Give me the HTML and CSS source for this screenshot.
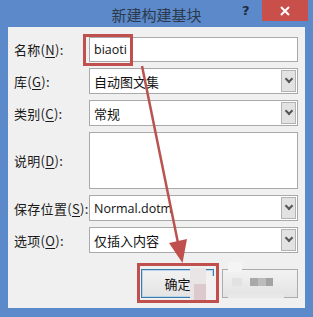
FILE: index.html
```html
<!DOCTYPE html>
<html>
  <head>
    <title>新建构建基块</title>
    <meta charset="UTF-8" />
    <link rel="stylesheet" href="styles.css">
  </head>
  <body>
    <div class="frame">
      <div class="titlebar">
        <span class="title">新建构建基块</span>
        <span class="help">?</span>
        <span class="close">
          <svg width="12" height="10" viewBox="0 0 12 10"><path d="M2 1 L10 9 M10 1 L2 9" stroke="#fff" stroke-width="2"/></svg>
        </span>
      </div>

      <div class="client">
        <div class="form">
          <label>名称(<u>N</u>):</label>
          <div class="field latin">biaoti</div>

          <label>库(<u>G</u>):</label>
          <div class="field">自动图文集<span class="drop"></span></div>

          <label>类别(<u>C</u>):</label>
          <div class="field">常规<span class="drop"></span></div>

          <label>说明(<u>D</u>):</label>
          <div class="field memo"></div>

          <label>保存位置(<u>S</u>):</label>
          <div class="field latin">Normal.dotm<span class="drop"></span></div>

          <label>选项(<u>O</u>):</label>
          <div class="field">仅插入内容<span class="drop"></span></div>
        </div>

        <div class="buttons">
          <button class="btn default">确定</button>
          <button class="btn"></button>
        </div>
      </div>

      <svg class="annot" width="313" height="317" viewBox="0 0 313 317">
        <!-- mosaic over cancel button -->
        <rect x="190" y="268" width="16" height="32" fill="#e9e4e6"/>
        <rect x="194" y="284" width="12" height="16" fill="#dcc9cd"/>
        <rect x="206" y="276" width="10" height="24" fill="#f3f1f2"/>
        <rect x="228" y="262" width="14" height="10" fill="#f4f4f4"/>
        <rect x="250" y="278" width="8" height="8" fill="#a9a9a9"/>
        <rect x="258" y="278" width="8" height="8" fill="#bcbcbc"/>
        <rect x="266" y="278" width="7" height="8" fill="#a3a3a3"/>
        <rect x="232" y="278" width="10" height="8" fill="#e2e2e2"/>
        <rect x="228" y="294" width="56" height="4" fill="#e8e8e8"/>
        <!-- annotation boxes and arrow -->
        <rect x="84.5" y="35.5" width="47" height="29" fill="none" stroke="#c0504d" stroke-width="3"/>
        <rect x="138.5" y="264.5" width="79" height="37" fill="none" stroke="#c0504d" stroke-width="3"/>
        <line x1="142" y1="66" x2="178" y2="243" stroke="#b85450" stroke-width="2.5"/>
        <polygon points="169,243 187,239 182.5,263" fill="#c0504d"/>
      </svg>
    </div>
  </body>
</html>
```

FILE: styles.css
```css
html, body {
  margin: 0;
  height: 100%;
}
body {
  background: #5b89ca;
  font-family: "Noto Sans CJK SC", sans-serif;
}

.frame {
  position: relative;
  width: 313px;
  height: 317px;
  display: flex;
  flex-direction: column;
}

.titlebar {
  height: 30px;
  display: flex;
  align-items: flex-start;
  position: relative;
}
.title {
  position: absolute;
  left: 0;
  right: 0;
  top: 4px;
  text-align: center;
  font-size: 15px;
  color: #2c3a4c;
  line-height: 22px;
}
.help {
  position: absolute;
  left: 242px;
  top: 3px;
  font-family: "DejaVu Sans", sans-serif;
  font-weight: bold;
  font-size: 13px;
  color: #1d2b40;
}
.close {
  margin-left: auto;
  margin-right: 5px;
  width: 46px;
  height: 21px;
  background: #c9504a;
  display: flex;
  align-items: center;
  justify-content: center;
}

.client {
  flex: 1;
  margin: 0 8px 9px 8px;
  background: #f0f0f0;
  padding: 10px 7px 10px 6px;
  display: flex;
  flex-direction: column;
}

.form {
  display: grid;
  grid-template-columns: 75px 209px;
  grid-template-rows: 25px 26px 26px 57px 26px 26px;
  row-gap: 6px;
  font-size: 13px;
  color: #1a1a1a;
}
.form label {
  display: flex;
  align-items: center;
  white-space: nowrap;
  letter-spacing: 0.3px;
}
.form u {
  text-underline-offset: 2px;
}

.field {
  box-sizing: border-box;
  background: #fff;
  border: 1px solid #a9a9a9;
  display: flex;
  align-items: center;
  padding-left: 4px;
  font-family: "Noto Sans CJK SC", sans-serif;
  font-size: 13px;
  color: #111;
}
.latin {
  font-family: "Open Sans", sans-serif;
  font-size: 12.5px;
}
.drop {
  align-self: stretch;
  width: 15px;
  margin: 1px 1px 1px auto;
  background: #e2e2e2;
  border: 1px solid #b3b3b3;
  box-sizing: border-box;
  display: flex;
  align-items: center;
  justify-content: center;
}
.drop::after {
  content: "";
  width: 4px;
  height: 4px;
  border-right: 2px solid #555;
  border-bottom: 2px solid #555;
  transform: translateY(-2px) rotate(45deg);
}

.buttons {
  margin-top: 16px;
  display: flex;
  justify-content: flex-end;
  gap: 8px;
}
.btn {
  width: 76px;
  height: 29px;
  border: 1px solid #acacac;
  background: linear-gradient(#f2f2f2, #e3e3e3);
  font-family: "Noto Sans CJK SC", sans-serif;
  font-size: 13px;
  color: #111;
  padding: 0;
}
.btn.default {
  width: 73px;
  border-color: #3d7bad;
  box-shadow: inset 0 0 0 1px #b9d5ec;
}

.annot {
  position: absolute;
  left: 0;
  top: 0;
}
```
